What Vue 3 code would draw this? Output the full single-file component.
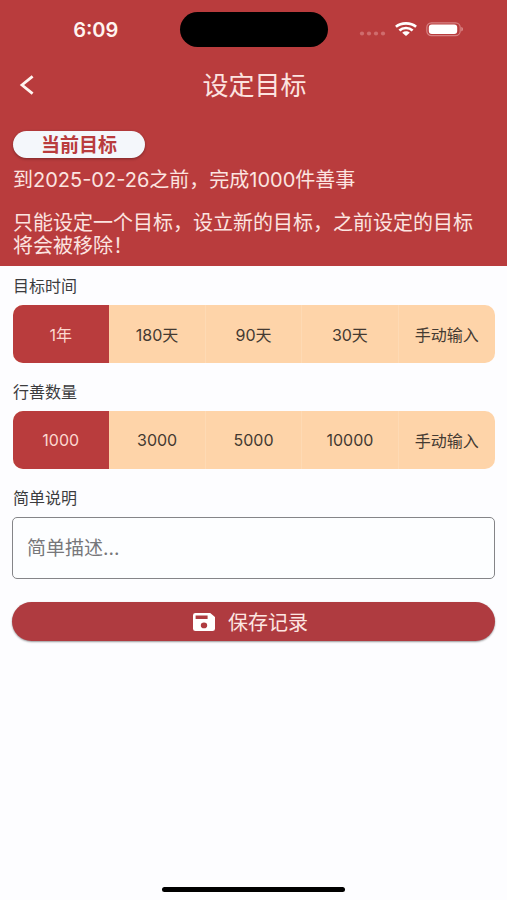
<script setup>
import { ref } from 'vue'

const periods = ['1年', '180天', '90天', '30天', '手动输入']
const amounts = ['1000', '3000', '5000', '10000', '手动输入']
const period = ref(0)
const amount = ref(0)
const note = ref('')
</script>

<template>
  <div class="screen" lang="zh-CN">
    <header class="hero">
      <div class="status">
        <span class="time">6:09</span>
        <span class="island"></span>
        <span class="signals">
          <svg width="28" height="6" viewBox="0 0 28 6" fill="#cf6c6d" aria-hidden="true">
            <circle cx="4" cy="2.5" r="2.1" /><circle cx="11" cy="2.5" r="2.1" />
            <circle cx="18" cy="2.5" r="2.1" /><circle cx="25" cy="2.5" r="2.1" />
          </svg>
          <svg class="wifi" width="24" height="16" viewBox="0 0 24 16" aria-hidden="true">
            <g fill="none" stroke="#fff" stroke-width="2.7">
              <path d="M1.9 4.7C7.4 .3 16.6 .3 22.1 4.7" />
              <path d="M5.4 8.4C9 5.2 15 5.2 18.6 8.4" />
            </g>
            <path d="M8.2 10.7c2.2-1.8 5.4-1.8 7.6 0L12 14.1z" fill="#fff" />
          </svg>
          <svg width="38" height="16" viewBox="0 0 38 16" aria-hidden="true">
            <rect x=".8" y=".8" width="33.4" height="12.8" rx="4.6" fill="none" stroke="#d68182" stroke-width="1.2" />
            <rect x="2.8" y="2.4" width="28.4" height="9.6" rx="3" fill="#fff" />
            <path d="M35.3 5c2.2 .6 2.2 3.8 0 4.4z" fill="#dc8d8d" />
          </svg>
        </span>
      </div>
      <nav class="bar">
        <button class="back" type="button" aria-label="返回">
          <svg width="16" height="22" viewBox="0 0 16 22" fill="none" stroke="#fff4f0" stroke-width="2.8" aria-hidden="true">
            <path d="M13.6 2.4 3 11 13.6 19.6" />
          </svg>
        </button>
        <h1>设定目标</h1>
      </nav>
      <div class="current">
        <span class="pill">当前目标</span>
        <p>到2025-02-26之前，完成1000件善事</p>
        <p class="hint">只能设定一个目标，设立新的目标，之前设定的目标将会被移除！</p>
      </div>
    </header>

    <form class="form" @submit.prevent>
      <h2 id="period">目标时间</h2>
      <div class="segments" role="group" aria-labelledby="period">
        <button v-for="(item, i) in periods" :key="item" type="button" :class="{ on: period === i }" :aria-pressed="period === i" @click="period = i">{{ item }}</button>
      </div>
      <h2 id="amount">行善数量</h2>
      <div class="segments" role="group" aria-labelledby="amount">
        <button v-for="(item, i) in amounts" :key="item" type="button" :class="{ on: amount === i }" :aria-pressed="amount === i" @click="amount = i">{{ item }}</button>
      </div>
      <label for="note">简单说明</label>
      <input id="note" v-model="note" type="text" placeholder="简单描述..." />
      <button class="save" type="submit">
        <svg width="22" height="18" viewBox="0 0 22 18" aria-hidden="true">
          <path fill="#fff" fill-rule="evenodd" d="M2.5 0H17.2L22 4V15.8Q22 18 19.5 18H2.5Q0 18 0 15.8V2.2Q0 0 2.5 0ZM2.6 2.6V6H14.6V2.6ZM11 9.6A3.2 2.8 0 1 0 11 15.2A3.2 2.8 0 1 0 11 9.6Z" />
        </svg>
        保存记录
      </button>
    </form>
    <div class="home"></div>
  </div>
</template>

<style>
body {
  margin: 0;
  background: #fdfdff;
}
</style>

<style scoped>
.screen {
  display: flex;
  flex-direction: column;
  min-height: 100vh;
  background: #fdfdff;
  color: #3c3c3e;
  font-family: Inter, "Noto Sans CJK SC", sans-serif;
}
button,
input {
  font-family: inherit;
}
.hero {
  background: #b93c3d;
  color: #fce4e0;
  padding-bottom: 8px;
}
.status {
  display: grid;
  grid-template-columns: 1fr 148px 1fr;
  align-items: center;
  height: 59px;
}
.time {
  justify-self: center;
  padding-left: 12px;
  font-size: 20px;
  font-weight: 600;
  color: #fff4f0;
}
.island {
  height: 35px;
  border-radius: 18px;
  background: #000;
}
.signals {
  display: flex;
  align-items: center;
  justify-content: flex-end;
  padding-right: 43px;
}
.signals svg:first-child {
  margin-top: 8px;
}
.wifi {
  margin: 0 8px;
}
.bar {
  display: grid;
  grid-template-columns: 56px 1fr 56px;
  align-items: center;
  height: 52px;
}
.back {
  display: flex;
  padding: 8px 0 8px 19px;
  border: 0;
  background: none;
}
h1 {
  margin: 0;
  padding: 2px 0 0 2px;
  text-align: center;
  font-size: 26px;
  line-height: 32px;
  font-weight: 400;
}
.current {
  padding: 20px 16px 0 13px;
  font-size: 20px;
  line-height: 23px;
}
.pill {
  display: block;
  box-sizing: border-box;
  width: 132px;
  padding-top: 2px;
  border-radius: 14px;
  background: #f4f7fb;
  color: #b93c3d;
  text-align: center;
  font-size: 19px;
  line-height: 25px;
  font-weight: 700;
  box-shadow: 0 1px 3px #0005;
}
.current p {
  margin: 11px 0 0;
}
.current .hint {
  margin-top: 20px;
}
.form {
  display: flex;
  flex-direction: column;
  padding: 9px 12px 0;
}
h2,
label {
  margin: 0 0 8px;
  padding-left: 1px;
  font-size: 16px;
  line-height: 22px;
  font-weight: 400;
}
.segments {
  display: grid;
  grid-template-columns: repeat(5, 1fr);
  margin: 0 0 18px 1px;
  height: 58px;
  border-radius: 10px;
  overflow: hidden;
  background: #fed4a9;
}
.segments button {
  padding: 0;
  border: 0;
  border-right: 1px solid #fedab4;
  background: none;
  color: #443a32;
  font-size: 16px;
}
.segments button:last-child {
  border-right: 0;
}
.segments .on {
  border-color: #b93c3d;
  background: #b93c3d;
  color: #fcd8d0;
}
input {
  box-sizing: border-box;
  width: 100%;
  height: 62px;
  padding: 0 14px;
  border: 1px solid #858588;
  border-radius: 5px;
  background: #fdfeff;
  color: #3c3c3e;
  font-size: 19px;
}
input::placeholder {
  color: #77777a;
  opacity: 1;
}
.save {
  display: flex;
  align-items: center;
  justify-content: center;
  gap: 13px;
  height: 39px;
  margin-top: 23px;
  padding: 0 6px 0 0;
  border: 0;
  border-radius: 20px;
  background: #af3b40;
  color: #fde6e2;
  font-size: 20px;
  box-shadow: 0 1px 2px #0006;
}
.home {
  align-self: center;
  width: 36%;
  height: 5px;
  margin: auto 0 8px;
  border-radius: 3px;
  background: #000;
}
</style>
